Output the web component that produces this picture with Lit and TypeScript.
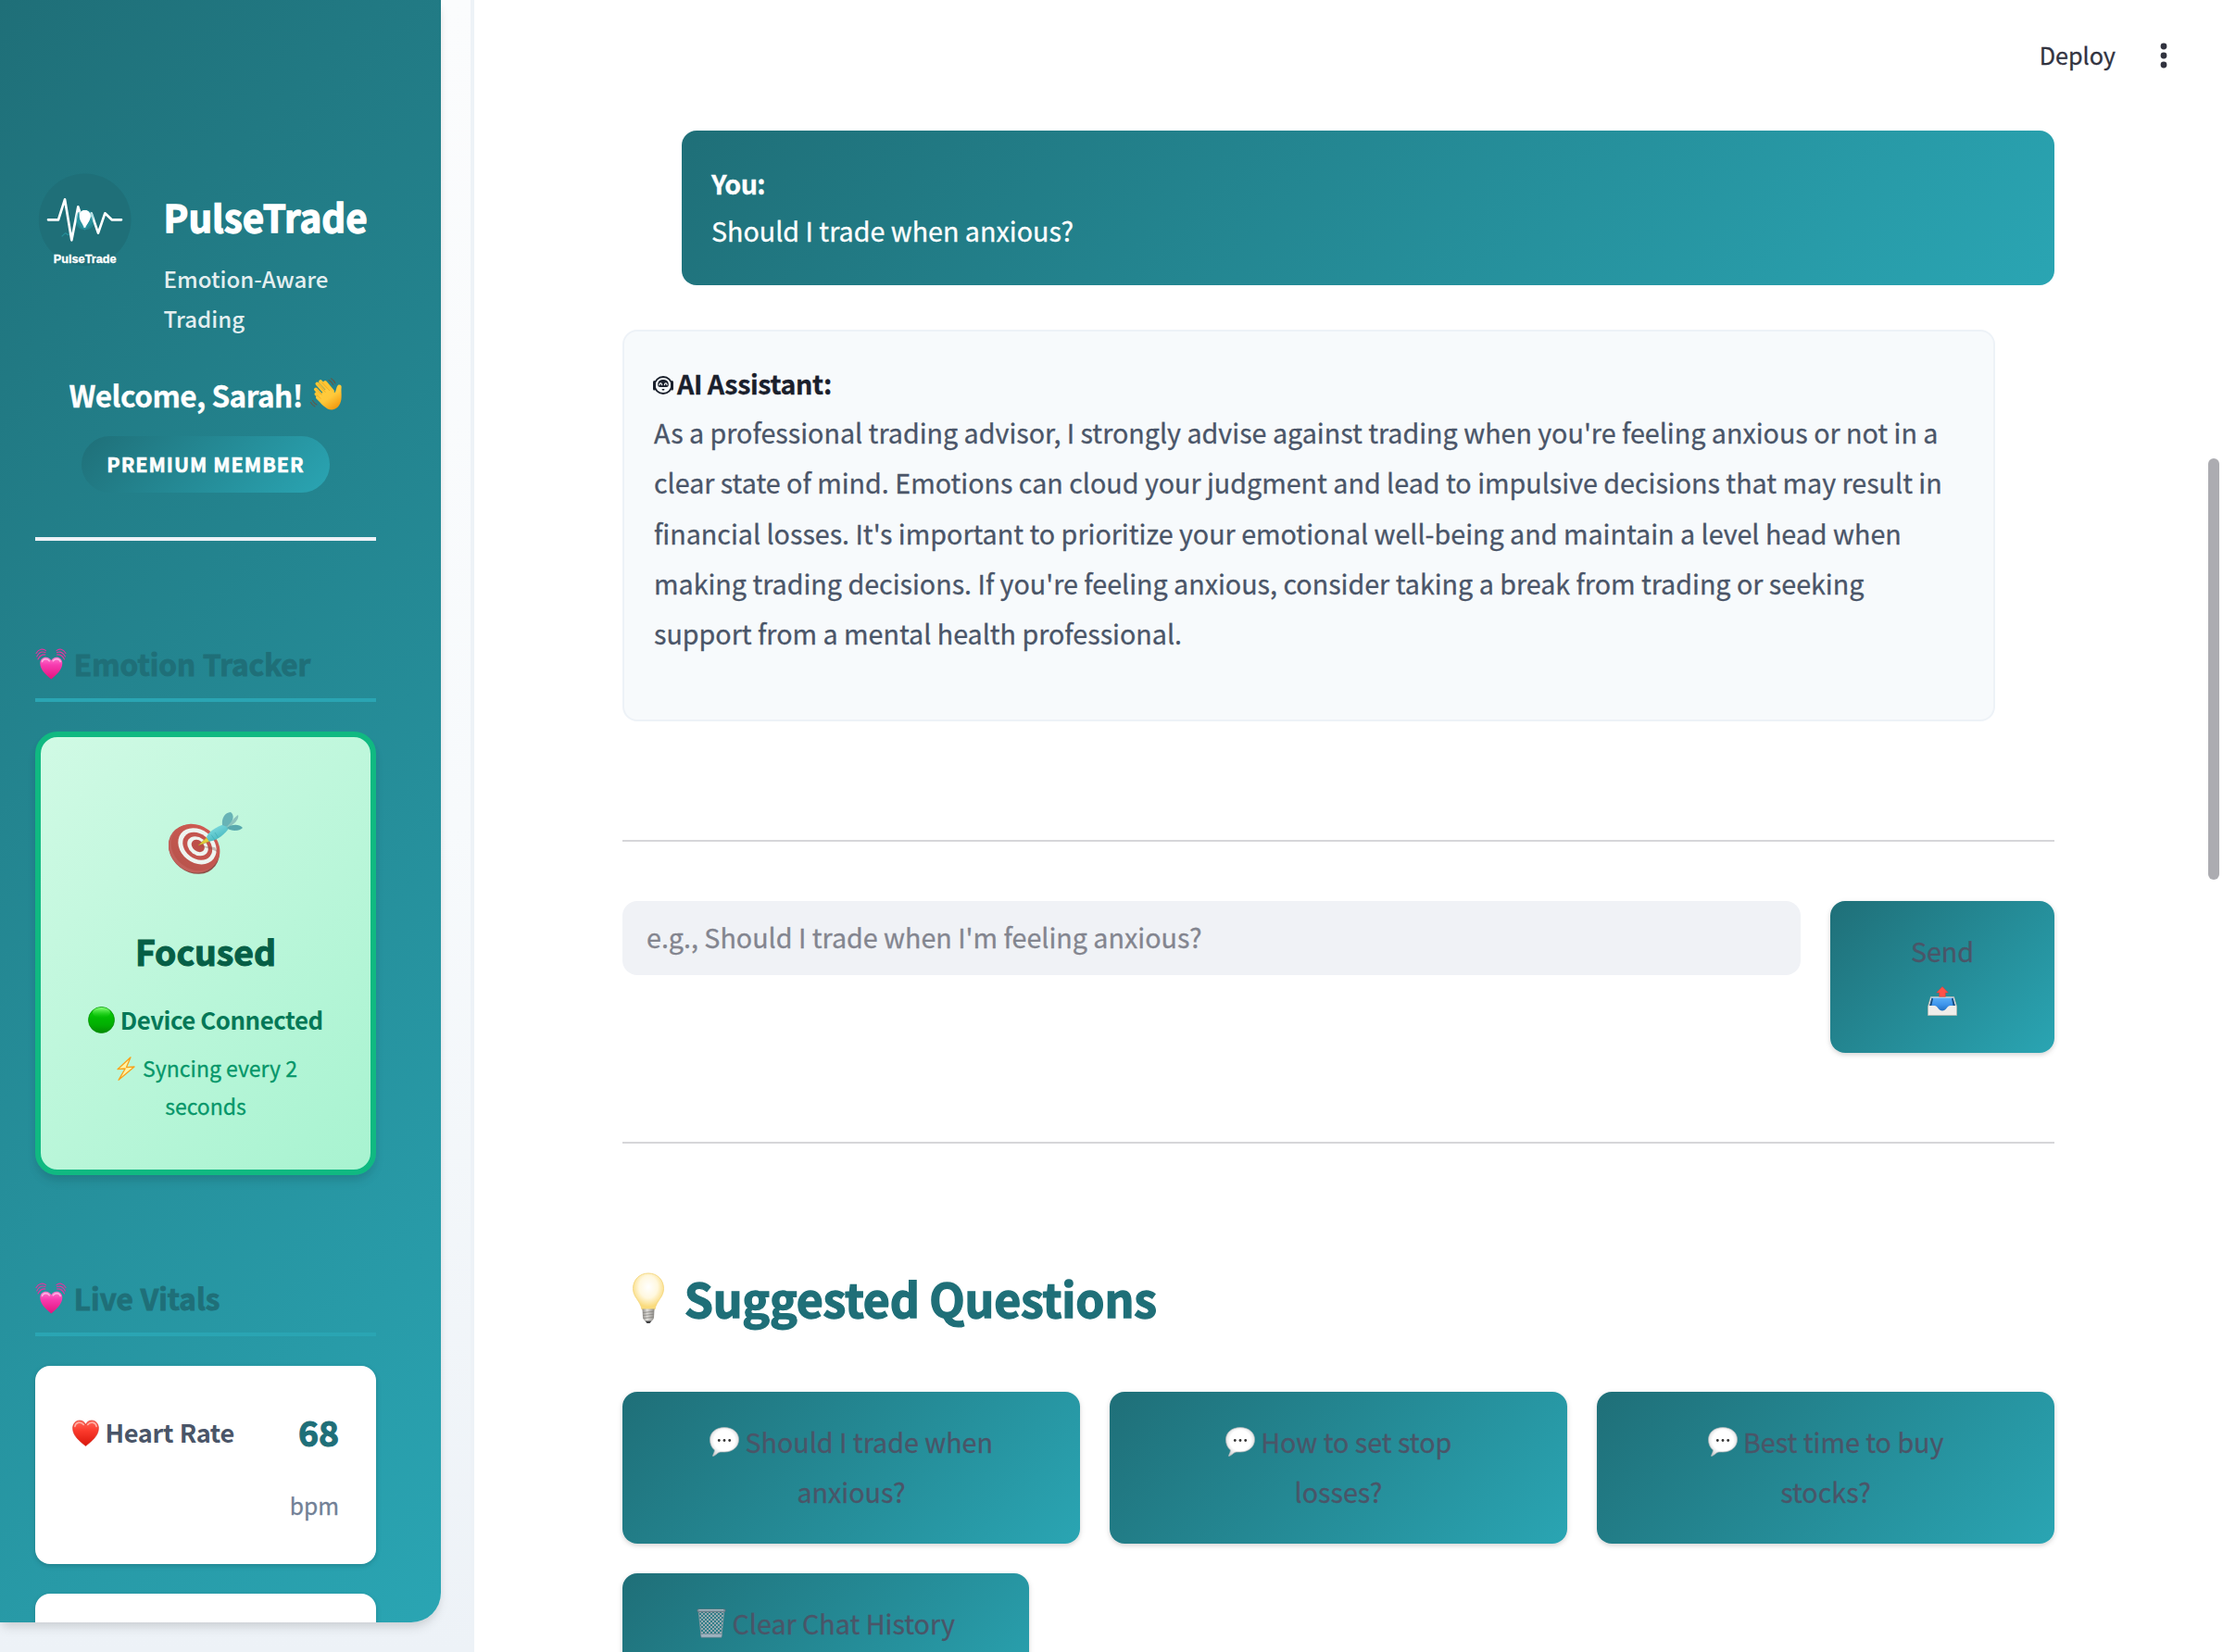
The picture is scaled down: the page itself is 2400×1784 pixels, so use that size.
import { LitElement, html, css, svg } from "lit";
import { customElement } from "lit/decorators.js";

/* ---------- icons ---------- */

const logo = html`
  <svg class="logo" width="104" height="104" viewBox="0 0 312 312">
    <circle cx="155" cy="154" r="149.500" fill="#1f6f78" />
    <circle cx="155" cy="154" r="33" fill="#2aa5b3" opacity=".35" />
    <path d="M80 208 92 197 101 203 114 194" fill="none" stroke="#2aa5b3" stroke-width="3.500" opacity=".6" stroke-linejoin="round" />
    <path d="M36 154H69L90 88 112 220 133 112 154 176" fill="none"
      stroke="#fff" stroke-width="8" stroke-linejoin="round" stroke-linecap="round" />
    <path d="M154 176 176 133 198 197 220 133 242 154H273" fill="none"
      stroke="#fff" stroke-width="8" stroke-linejoin="round" stroke-linecap="round" />
    <path d="M126 148C126 128 142 122 154 130C167 122 183 128 183 148C183 166 166 178 154 188C143 178 126 166 126 148Z" fill="#2aa5b3" opacity=".4" />
    <path d="M137 142C137 127 148 121 154.500 123C162 121 173 127 173 142C173 157 163 167 154.500 180C147 167 137 157 137 142Z" fill="#fff" />
    <text x="53" y="293" textLength="204" lengthAdjust="spacingAndGlyphs" font-size="38" font-weight="700" fill="#fff"
      stroke="#fff" stroke-width="1" font-family="Liberation Sans, sans-serif">PulseTrade</text>
  </svg>`;

const wave = html`
  <svg class="ic wave" width="36" height="36" viewBox="0 0 36 36">
    <defs><linearGradient id="wv" x1="0" y1="0" x2="0.700" y2="1"><stop offset="0" stop-color="#ffcf3f" /><stop offset=".6" stop-color="#ffc83a" /><stop offset="1" stop-color="#f39a0f" /></linearGradient></defs>
    <path d="M13 19 7 12.500M17 16 8.500 6.500M21 14 12 4.200M25 14.500 17 5M15 22 7.500 17.500" stroke="#fcc534" stroke-width="4" stroke-linecap="round" fill="none" />
    <path d="M12 18 19 11.500 27.500 16C29.500 13 28.800 9.500 31.500 7.500C34 7 35 8.500 34.600 10.500C34.200 13.500 34.800 17 34.600 21C34.500 27.500 31 34 24.500 34.500C18.500 35 13 28 7.500 22.500C6 20.500 8 18.500 10 20Z" fill="url(#wv)" />
    <path d="M13.500 18.500 7.800 12.400M17.500 15.700 9.800 7M22 14 13.600 5M12.500 22.500 8 18.800" stroke="#e9961a" stroke-width=".7" fill="none" opacity=".8" />
    <path d="M21 2.500C23 3.500 24.700 5 25.700 7.500M23.500.8C25.500 2 27 3.700 28 6M1.500 26.500C2.500 28.700 4 30 6 31M3.500 24.500C4.500 26.500 6 28 8 29" stroke="#5d5a4c" stroke-width="1.100" fill="none" stroke-linecap="round" />
  </svg>`;

const beating = html`
  <svg class="ic beat" width="34" height="34" viewBox="0 0 34 34">
    <defs><linearGradient id="bt" x1="0" y1="0" x2="0" y2="1"><stop offset="0" stop-color="#ff79cf" /><stop offset=".35" stop-color="#f73cb0" /><stop offset="1" stop-color="#e3127d" /></linearGradient></defs>
    <path d="M17.300 33.500C11 28.500 5.300 23 5.300 16.300C5.300 9 14.300 7.500 17.300 13.300C20.300 7.500 29.300 9 29.300 16.300C29.300 23 23.500 28.500 17.300 33.500Z" fill="url(#bt)" />
    <path d="M7.500 14.500C8.300 11.300 13.500 10.700 15.300 13.800M19.300 13.800C21.500 10.700 26.300 11.300 27.200 14.500" stroke="#ffc5ea" stroke-width="1.500" fill="none" stroke-linecap="round" opacity=".8" />
    <path d="M1 5.500C4 .6 8.500 .2 11.500 2.600M1.800 9C4 4.500 7.500 3.300 11 4.600M3 12C5 8 7.500 6.500 11 7M33 5.500C30 .6 26 .2 23 2.600M32.400 9C30 4.500 27 3.300 23.500 4.600M31.500 12C29.500 8 27 6.500 23.500 7" stroke="#e5339f" stroke-width="1.100" fill="none" stroke-linecap="round" />
  </svg>`;

const target = html`
  <svg class="target" width="80" height="68" viewBox="0 0 80 68">
    <defs>
      <linearGradient id="tg" x1="0" y1="0" x2="0" y2="1"><stop offset="0" stop-color="#cf5a52" /><stop offset="1" stop-color="#b9544c" /></linearGradient>
      <linearGradient id="dt" x1="0" y1="0" x2=".6" y2="1"><stop offset="0" stop-color="#8fe6e8" /><stop offset="1" stop-color="#43b6be" /></linearGradient>
    </defs>
    <ellipse cx="27.500" cy="40.500" rx="29" ry="24.500" transform="rotate(38 27.500 40.500)" fill="#8f5149" />
    <ellipse cx="26.800" cy="39.500" rx="28.500" ry="24.500" transform="rotate(38 26.800 39.500)" fill="#c2605a" />
    <ellipse cx="29" cy="38" rx="28" ry="23.500" transform="rotate(38 29 38)" fill="url(#tg)" />
    <ellipse cx="31" cy="36.800" rx="22.300" ry="17.800" transform="rotate(38 31 36.800)" fill="#eef5f0" />
    <ellipse cx="31.200" cy="36.800" rx="17.300" ry="13.300" transform="rotate(38 31.200 36.800)" fill="#c4544d" />
    <ellipse cx="31.500" cy="36.800" rx="12.300" ry="9.300" transform="rotate(38 31.500 36.800)" fill="#eef5f0" />
    <ellipse cx="31.800" cy="36.500" rx="7.800" ry="5.800" transform="rotate(38 31.800 36.500)" fill="#bd4f48" />
    <path d="M32 36 47 40.500 53 43 50 38Z" fill="#7d4a45" opacity=".35" />
    <path d="M32 36 41 27.500 44.500 31.500Z" fill="#e3cf3a" stroke="#a98f2b" stroke-width=".5" />
    <path d="M41 27C43 21 51 16.500 61 12.500L64.500 18.500C58 26 51 31.500 43.500 31.500Z" fill="url(#dt)" />
    <path d="M58 14C57 6 61 .5 67 0C71 3 71 9 63.500 16Z" fill="#68b3b6" />
    <path d="M63 15.500C68 11 69.500 7 75 3C76.500 7 72 12 66 15.500Z" fill="#8dc3bd" />
    <path d="M62.500 17C68 13 76 12.500 80 17C76 21 68 21 62.500 17Z" fill="#58a9ae" />
    <path d="M46 24.500 50 30M50 22 53.500 27.500" stroke="#3ca6ae" stroke-width=".8" opacity=".7" />
  </svg>`;

const greenDot = html`
  <svg class="ic dot" width="29" height="29" viewBox="0 0 29 29">
    <defs>
      <linearGradient id="gd" x1="0" y1="0" x2="0" y2="1"><stop offset="0" stop-color="#11d60e" /><stop offset=".45" stop-color="#02b902" /><stop offset=".7" stop-color="#02ae02" /><stop offset="1" stop-color="#048a03" /></linearGradient>
      <linearGradient id="gh" x1="0" y1="0" x2="0" y2="1"><stop offset="0" stop-color="#8dff7d" /><stop offset="1" stop-color="#1fd01a" stop-opacity="0" /></linearGradient>
    </defs>
    <circle cx="14.500" cy="14.500" r="14" fill="url(#gd)" stroke="#0a8f0a" stroke-width=".8" />
    <ellipse cx="14.500" cy="6.500" rx="9.500" ry="5.500" fill="url(#gh)" />
  </svg>`;

const bolt = html`
  <svg class="ic bolt" width="26" height="26" viewBox="0 0 26 26">
    <path d="M18 .8 4 13.700 12.200 13 5 25.300 22 11 13.500 11.600Z" fill="#fff3a6" stroke="#f8a21c" stroke-width="1.300" stroke-linejoin="round" />
  </svg>`;

const redHeart = html`
  <svg class="ic heart" width="29" height="29" viewBox="0 0 29 29">
    <defs><linearGradient id="rh" x1="0" y1="0" x2="0" y2="1"><stop offset="0" stop-color="#ff6a5c" /><stop offset=".4" stop-color="#fb3a2c" /><stop offset="1" stop-color="#d9150b" /></linearGradient></defs>
    <path d="M14.500 28.500C8 23.500.6 17.500.6 9.300C.6 4.500 4 1 8 1C11 1 13.500 2.700 14.500 5.600C15.500 2.700 18 1 21 1C25 1 28.400 4.500 28.400 9.300C28.400 17.500 21 23.500 14.500 28.500Z" fill="url(#rh)" stroke="#d3261b" stroke-width=".6" />
    <path d="M2.800 7.500C3.700 2.800 9.500 1.800 12.300 5.500M16.700 5.500C19.500 1.800 25.300 2.800 26.200 7.500" stroke="#ffc0b6" stroke-width="1.500" fill="none" stroke-linecap="round" opacity=".85" />
  </svg>`;

const botFace = html`
  <svg class="ic face" width="22" height="20" viewBox="0 0 23 20" preserveAspectRatio="none">
    <rect x="0" y="5" width="3" height="10.500" rx="1.500" fill="#1a202c" />
    <rect x="20" y="5" width="3" height="10.500" rx="1.500" fill="#1a202c" />
    <ellipse cx="11.500" cy="10" rx="9.700" ry="9" fill="none" stroke="#1a202c" stroke-width="2" />
    <path d="M5.500 8.500C6 5 8.500 4 11.500 4C14.500 4 17 5 17.500 8.500C17.800 11 17 12 15 12H8C6 12 5.200 11 5.500 8.500Z" fill="#1a202c" />
    <path d="M7.200 9.600C7.600 7.300 9.700 7.300 10.100 9.600M12.900 9.600C13.300 7.300 15.400 7.300 15.800 9.600" stroke="#f7fafc" stroke-width="1.200" fill="none" stroke-linecap="round" />
    <rect x="10" y="14" width="3" height="1.500" rx=".7" fill="#1a202c" />
  </svg>`;

const outbox = html`
  <svg class="ic" width="32" height="32" viewBox="0 0 32 32">
    <defs><linearGradient id="ob" x1="0" y1="0" x2="0" y2="1"><stop offset="0" stop-color="#58aef8" /><stop offset=".55" stop-color="#3d93ea" /><stop offset="1" stop-color="#1f6fc0" /></linearGradient></defs>
    <path d="M3.500 11.500H28.500L31.500 22V31.500H.500V22Z" fill="#efedea" stroke="#b9b7ae" stroke-width=".7" />
    <path d="M4.500 12.500H27.500L29.800 21H24C21 21.500 20 26.500 16 26.500C12 26.500 11 21.500 8 21H2.200Z" fill="url(#ob)" />
    <path d="M4.500 12.500 2.200 21H4.300L6 13.500ZM27.500 12.500 29.800 21H27.700L26 13.500Z" fill="#1b4e80" />
    <path d="M16 .5 22.300 7H19.300V11.300H12.700V7H9.700Z" fill="#ff5148" stroke="#e03a34" stroke-width=".5" />
  </svg>`;

const bubble = html`
  <svg class="ic" width="32" height="32" viewBox="0 0 32 32">
    <defs><radialGradient id="bb" cx=".5" cy=".45" r=".6"><stop offset=".6" stop-color="#ffffff" /><stop offset="1" stop-color="#cfd0d2" /></radialGradient></defs>
    <path d="M16 .6C25 .6 31.500 6 31.500 13.500C31.500 21.500 25 27 16 27C14 27 11.500 26.800 10 27.500C8 28.800 6 31 3.700 31.500C3 31.200 5.300 28 5.500 25C2.300 22.300.5 18.500.5 13.500C.5 6 7 .6 16 .6Z" fill="url(#bb)" stroke="#b4b8ba" stroke-width=".7" />
    <circle cx="10.300" cy="14.500" r="1.400" fill="#333" /><circle cx="16" cy="14.500" r="1.400" fill="#333" /><circle cx="21.700" cy="14.500" r="1.400" fill="#333" />
  </svg>`;

const bulb = html`
  <svg class="ic bulb" width="56" height="56" viewBox="0 0 56 56">
    <defs>
      <radialGradient id="bl" cx=".5" cy=".38" r=".55"><stop offset="0" stop-color="#ffffff" /><stop offset=".55" stop-color="#fff8df" /><stop offset="1" stop-color="#fadb7c" /></radialGradient>
      <linearGradient id="bs" x1="0" y1="0" x2="1" y2="0"><stop offset="0" stop-color="#8f8d89" /><stop offset=".4" stop-color="#e4e2de" /><stop offset="1" stop-color="#8a8884" /></linearGradient>
    </defs>
    <path d="M28 1C37.500 1 44.500 8 44.500 17.500C44.500 27 37 30 35 40H21C19 30 11.500 27 11.500 17.500C11.500 8 18.500 1 28 1Z" fill="url(#bl)" stroke="#f3d375" stroke-width=".8" />
    <path d="M21.500 39.500H34.500L34 49C33.500 51.500 31.500 52.500 31 53H25C24.500 52.500 22.500 51.500 22 49Z" fill="url(#bs)" />
    <path d="M22 43.500 34 42.300M22 46.500 34 45.300M22.500 49.500 33.500 48.300" stroke="#8b8985" stroke-width=".9" />
    <path d="M24.500 52.500H31.500L29.500 55H26.500Z" fill="#3c3d3f" />
  </svg>`;

const trash = html`
  <svg class="ic" width="32" height="32" viewBox="0 0 32 32">
    <defs>
      <pattern id="mesh" width="4" height="4" patternUnits="userSpaceOnUse"><path d="M0 0 4 4M4 0 0 4" stroke="#a3b0b6" stroke-width=".9" /></pattern>
    </defs>
    <path d="M2.200 3H29.800L27 29.500H5Z" fill="#3d7f8a" opacity=".6" />
    <path d="M2.200 3H29.800L27 29.500H5Z" fill="url(#mesh)" stroke="#8798a0" stroke-width=".8" />
    <path d="M4.500 27.500H27.500L27 31.300H5Z" fill="#9fb3c0" stroke="#6b7d88" stroke-width=".5" />
    <rect x=".8" y=".7" width="30.400" height="3" rx="1.200" fill="#7f95a1" stroke="#566771" stroke-width=".5" />
    <path d="M2.500 1.600H29" stroke="#c7d3da" stroke-width=".7" />
  </svg>`;

const dots = html`
  <svg class="dots" width="8" height="28" viewBox="0 0 8 28">
    ${[4, 14, 24].map((y) => svg`<circle cx="4" cy=${y} r="3.400" fill="#31333f" />`)}
  </svg>`;

/* ---------- data ---------- */

const questions: [string, string][] = [
  ["Should I trade when", "anxious?"],
  ["How to set stop", "losses?"],
  ["Best time to buy", "stocks?"],
];

const answer =
  "As a professional trading advisor, I strongly advise against trading when you're feeling anxious or not in a clear state of mind. Emotions can cloud your judgment and lead to impulsive decisions that may result in financial losses. It's important to prioritize your emotional well-being and maintain a level head when making trading decisions. If you're feeling anxious, consider taking a break from trading or seeking support from a mental health professional.";

@customElement("app-root")
export class AppRoot extends LitElement {
  static styles = css`
    :host {
      --deep: #1f6f78;
      --teal: #2aa5b3;
      --brand: linear-gradient(135deg, var(--deep) 0%, var(--teal) 100%);
      display: block;
      font-family: "Noto Sans CJK SC", "Noto Sans", sans-serif;
      font-size: 28.670px;
      -webkit-text-stroke: 0.300px currentColor;
    }
    * { box-sizing: border-box; }
    svg { display: block; flex: none; -webkit-text-stroke: 0; }
    .ic { display: inline-block; vertical-align: -4px; }
    .app { display: flex; width: 2400px; height: 1784px; overflow: hidden; background: #fff; }

    .rail {
      flex: none; width: 512px; height: 1784px;
      background: linear-gradient(180deg, #fbfcfd 0%, #f7fafc 50%, #edf2f7 100%);
      border-right: 4px solid #edf2f7;
    }
    .sidebar {
      width: 476px; height: 1752px; padding: 186px 70px 0 38px;
      background: var(--brand);
      border-radius: 0 0 32px 0;
      box-shadow: 0 8px 12px -2px rgba(0, 0, 0, 0.1), 0 4px 8px -2px rgba(0, 0, 0, 0.06);
      clip-path: inset(0 -30px -30px 0);
    }
    .scroll { height: 1566px; overflow: hidden; margin: 0 -70px 0 -38px; padding: 0 70px 0 38px; }
    .brand { display: flex; height: 178px; }
    .logo { margin-left: 2px; }
    .names { margin: 20.500px 0 0 32.500px; color: #fff; white-space: nowrap; }
    .name { font-size: 40.300px; line-height: 54px; font-weight: 700; -webkit-text-stroke: 1.300px #fff; }
    .tagline { margin-top: 18px; font-size: 24.100px; line-height: 43px; font-weight: 500; color: rgba(255, 255, 255, 0.9); -webkit-text-stroke: 0; }
    .welcome {
      margin-top: 34px; line-height: 56px; font-size: 31.600px; font-weight: 700;
      letter-spacing: -0.550px; color: #fff; text-align: center; white-space: nowrap;
    }
    .pill {
      width: 268px; height: 61px; margin: 17px auto 0; padding-top: 1px; border-radius: 31px;
      background: var(--brand); color: #fff; text-align: center; -webkit-text-stroke: 0.600px currentColor;
      font-size: 21.500px; font-weight: 700; letter-spacing: 1px; line-height: 57px; white-space: nowrap;
    }
    .rule { height: 4px; margin-top: 48px; background: #edf2f7; }
    .section {
      height: 71px; margin: 103px 0 0; padding-top: 1px; border-bottom: 4px solid var(--teal);
      color: var(--deep); font-size: 31.500px; font-weight: 700; line-height: 56px; white-space: nowrap;
      word-spacing: 0.700px; -webkit-text-stroke: 0.900px currentColor;
    }
    .mood {
      height: 479px; margin-top: 32px; border: 6px solid #10b981; border-radius: 24px;
      background: linear-gradient(135deg, #d1fae5 0%, #a7f3d0 100%);
      background-origin: border-box;
      box-shadow: 0 8px 12px -2px rgba(0, 0, 0, 0.1), 0 4px 8px -2px rgba(0, 0, 0, 0.06);
      text-align: center; white-space: nowrap;
    }
    .target { margin: 81px auto 0; }
    .state { margin-top: 49px; font-size: 37.300px; font-weight: 700; line-height: 66px; color: #065f46; -webkit-text-stroke: 1.100px currentColor; }
    .device { margin-top: 18px; font-size: 25.800px; font-weight: 700; letter-spacing: -0.450px; line-height: 46px; color: #047857; -webkit-text-stroke: 0; }
    .sync { margin-top: 9px; font-size: 23px; line-height: 41px; color: #059669; }
    .vital {
      display: flex; justify-content: space-between; height: 214px; margin-top: 32px; padding: 38px 40px 0;
      background: #fff; border-radius: 16px;
      box-shadow: 0 2px 6px rgba(0, 0, 0, 0.1), 0 2px 4px rgba(0, 0, 0, 0.06);
      white-space: nowrap;
    }
    .label { margin-top: 9px; font-size: 27.200px; font-weight: 700; letter-spacing: -0.350px; word-spacing: 0.700px; line-height: 48px; color: #4a5568; -webkit-text-stroke: 0; }
    .reading { text-align: right; }
    .value { margin-top: 1px; font-size: 37.300px; font-weight: 700; line-height: 64px; color: var(--deep); -webkit-text-stroke: 1.100px currentColor; }
    .unit { margin-top: 24px; font-size: 24.600px; line-height: 46px; color: #718096; }

    .main { position: relative; flex: 1; min-width: 0; height: 1784px; overflow: hidden; }
    .top { display: flex; justify-content: flex-end; align-items: center; height: 120px; padding-right: 60px; }
    .deploy { margin: 0 48px 3px 0; font-size: 25.200px; line-height: 44px; color: #31333f; }
    .content { width: 1546px; margin-left: 160px; }
    .mine {
      height: 167px; margin: 21px 0 0 64px; padding: 31px 32px 0; border-radius: 16px;
      background: var(--brand); color: #fff; line-height: 51px;
    }
    .mine b { display: block; letter-spacing: -0.600px; }
    .reply {
      width: 1482px; height: 423px; margin-top: 48px; padding: 30px 32px 0; border: 2px solid #edf2f7;
      border-radius: 16px; background: #f7fafc;
    }
    .who { line-height: 51px; font-weight: 700; letter-spacing: -0.380px; word-spacing: -0.500px; color: #1a202c; }
    .face { margin-left: -1.500px; margin-right: -1px; vertical-align: 0; }
    .reply p { margin: 1px 0 0; line-height: 54.300px; color: #4a5568; }
    .hr { height: 2px; background: #d6d6d9; }
    .hr.a { margin-top: 128px; }
    .hr.b { margin-top: 96px; }
    .ask { display: flex; gap: 32px; align-items: flex-start; margin-top: 64px; }
    .input {
      flex: 1; height: 80px; padding: 1px 0 0 26px; border-radius: 16px; background: #f0f2f6;
      color: #83858f; line-height: 76px;
    }
    .btn {
      height: 164px; padding-top: 27px; border-radius: 16px; background: var(--brand); color: #4a5568;
      text-align: center; line-height: 54.400px; white-space: nowrap;
      box-shadow: 0 2px 6px rgba(0, 0, 0, 0.12), 0 2px 4px rgba(0, 0, 0, 0.06);
    }
    .send { width: 242px; }
    .clear { width: 439px; margin-top: 32px; }
    h2 {
      margin: 126px 0 0; font-size: 50px; font-weight: 700; letter-spacing: -0.200px; word-spacing: -0.500px;
      line-height: 80px; color: var(--deep); -webkit-text-stroke: 1.400px currentColor;
    }
    .bulb { vertical-align: -7px; }
    .grid { display: grid; grid-template-columns: repeat(3, 1fr); gap: 32px; margin-top: 62px; }
    .thumb { position: absolute; right: 4px; top: 495px; width: 12px; height: 455px; border-radius: 6px; background: #acacb1; }
  `;

  render() {
    return html`
      <div class="app">
        <div class="rail">
          <aside class="sidebar">
            <div class="scroll">
              <div class="brand">
                ${logo}
                <div class="names">
                  <div class="name">PulseTrade</div>
                  <div class="tagline">Emotion-Aware<br />Trading</div>
                </div>
              </div>
              <div class="welcome">Welcome, Sarah! ${wave}</div>
              <div class="pill">PREMIUM MEMBER</div>
              <div class="rule"></div>

              <div class="section">${beating} Emotion Tracker</div>
              <div class="mood">
                ${target}
                <div class="state">Focused</div>
                <div class="device">${greenDot} Device Connected</div>
                <div class="sync">${bolt} Syncing every 2<br />seconds</div>
              </div>

              <div class="section">${beating} Live Vitals</div>
              <div class="vital">
                <div class="label">${redHeart} Heart Rate</div>
                <div class="reading">
                  <div class="value">68</div>
                  <div class="unit">bpm</div>
                </div>
              </div>
              <div class="vital"></div>
            </div>
          </aside>
        </div>

        <main class="main">
          <header class="top"><span class="deploy">Deploy</span>${dots}</header>
          <div class="content">
            <div class="mine"><b>You:</b>Should I trade when anxious?</div>
            <div class="reply">
              <div class="who">${botFace} AI Assistant:</div>
              <p>${answer}</p>
            </div>
            <div class="hr a"></div>
            <div class="ask">
              <div class="input">e.g., Should I trade when I'm feeling anxious?</div>
              <div class="btn send">Send<br />${outbox}</div>
            </div>
            <div class="hr b"></div>
            <h2>${bulb} Suggested Questions</h2>
            <div class="grid">
              ${questions.map(([a, b]) => html`<div class="btn">${bubble} ${a}<br />${b}</div>`)}
            </div>
            <div class="btn clear">${trash} Clear Chat History</div>
          </div>
          <div class="thumb"></div>
        </main>
      </div>
    `;
  }
}
